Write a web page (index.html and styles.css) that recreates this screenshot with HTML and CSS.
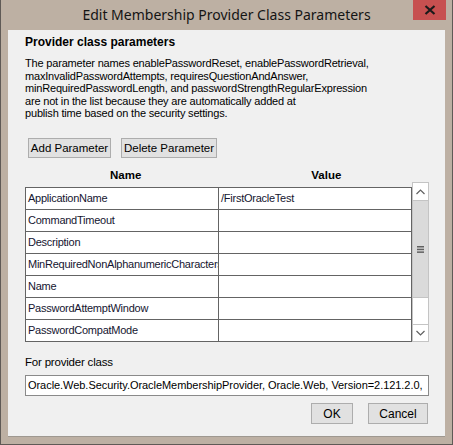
FILE: index.html
```html
<!DOCTYPE html>
<html>
<head>
<meta charset="utf-8">
<link rel="stylesheet" href="styles.css">
</head>
<body>
<div class="window">
  <div class="titlebar">
    <div class="tb-spacer"></div>
    <div class="title">Edit Membership Provider Class Parameters</div>
    <div class="tb-right"><div class="close"><svg width="12" height="10" viewBox="0 0 12 10"><path d="M1.5 1 L10.5 9 M10.5 1 L1.5 9" stroke="#1a1a1a" stroke-width="2.2" fill="none"/></svg></div></div>
  </div>
  <div class="client">
    <div class="heading">Provider class parameters</div>
    <p class="info">The parameter names enablePasswordReset, enablePasswordRetrieval,<br>maxInvalidPasswordAttempts, requiresQuestionAndAnswer,<br>minRequiredPasswordLength, and passwordStrengthRegularExpression<br>are not in the list because they are automatically added at<br>publish time based on the security settings.</p>
    <div class="btnrow">
      <button class="btn btn-add">Add Parameter</button>
      <button class="btn btn-del">Delete Parameter</button>
    </div>
    <div class="colheads">
      <div class="colhead colhead-name">Name</div>
      <div class="colhead colhead-value">Value</div>
    </div>
    <div class="gridwrap">
      <div class="grid">
        <div class="cell">ApplicationName</div><div class="cell">/FirstOracleTest</div>
        <div class="cell">CommandTimeout</div><div class="cell"></div>
        <div class="cell">Description</div><div class="cell"></div>
        <div class="cell">MinRequiredNonAlphanumericCharacters</div><div class="cell"></div>
        <div class="cell">Name</div><div class="cell"></div>
        <div class="cell">PasswordAttemptWindow</div><div class="cell"></div>
        <div class="cell">PasswordCompatMode</div><div class="cell"></div>
      </div>
      <div class="scrollbar">
        <div class="sb-btn"><svg width="9" height="6" viewBox="0 0 9 6"><path d="M0.5 5 L4.5 1 L8.5 5" stroke="#606060" stroke-width="1.2" fill="none"/></svg></div>
        <div class="sb-thumb"><svg width="7" height="7" viewBox="0 0 7 7"><rect x="0" y="0" width="7" height="1.5" fill="#606060"/><rect x="0" y="2.7" width="7" height="1.5" fill="#606060"/><rect x="0" y="5.4" width="7" height="1.5" fill="#606060"/></svg></div>
        <div class="sb-track"></div>
        <div class="sb-btn sb-btn-down"><svg width="9" height="6" viewBox="0 0 9 6"><path d="M0.5 1 L4.5 5 L8.5 1" stroke="#606060" stroke-width="1.2" fill="none"/></svg></div>
      </div>
    </div>
    <div class="forlabel">For provider class</div>
    <div class="textbox">Oracle.Web.Security.OracleMembershipProvider, Oracle.Web, Version=2.121.2.0,</div>
    <div class="okrow">
      <button class="btn btn-ok">OK</button>
      <button class="btn btn-cancel">Cancel</button>
    </div>
  </div>
</div>
</body>
</html>
```

FILE: styles.css
```css
html, body {
  margin: 0;
  padding: 0;
  background: #bdb0a3;
}
.window {
  width: 453px;
  height: 445px;
  box-sizing: border-box;
  background: #bdb0a3;
  border-left: 1px solid #5f5a56;
  border-right: 1px solid #5f5a56;
  border-bottom: 1px solid #5f5a56;
  display: flex;
  flex-direction: column;
  font-family: "Liberation Sans", Arial, sans-serif;
}
.titlebar {
  height: 30px;
  display: grid;
  grid-template-columns: 1fr auto 1fr;
  align-items: start;
}
.title {
  font-family: "Noto Sans", "Open Sans", sans-serif;
  font-size: 14px;
  color: #141414;
  line-height: 30px;
}
.tb-right {
  display: flex;
  justify-content: flex-end;
  padding-right: 6px;
}
.close {
  width: 33px;
  height: 20px;
  background: #c75050;
  display: flex;
  align-items: center;
  justify-content: center;
}
.client {
  margin: 0 7px 7px 7px;
  flex: 1;
  background: #f0f0f0;
  border-bottom: 1px solid #9e9890;
  padding: 0 16px 0 17px;
  display: flex;
  flex-direction: column;
  color: #000;
}
.heading {
  font-weight: bold;
  font-size: 12px;
  line-height: 14px;
  margin-top: 5px;
}
.info {
  margin: 8px 0 0 0;
  font-size: 11px;
  line-height: 12.5px;
  letter-spacing: -0.18px;
}
.btnrow {
  display: flex;
  gap: 10px;
  margin-top: 18.5px;
  padding-left: 3px;
}
.btn {
  font-family: "Liberation Sans", Arial, sans-serif;
  font-size: 11.5px;
  color: #000;
  background: #e1e1e1;
  border: 1px solid #adadad;
  height: 20px;
  padding: 0;
  margin: 0;
  box-sizing: border-box;
}
.btn-add { width: 83px; }
.btn-del { width: 96px; }
.colheads {
  display: flex;
  margin-top: 9px;
  height: 16px;
  font-weight: bold;
  font-size: 11.5px;
  line-height: 16px;
}
.colhead-name { margin-left: 85px; }
.colhead-value { margin-left: 170px; }
.gridwrap {
  display: flex;
  align-items: flex-start;
  margin-top: -1px;
}
.grid {
  margin-top: 5px;
  width: 387px;
  box-sizing: border-box;
  display: grid;
  grid-template-columns: 193px 193px;
  border-top: 1px solid #646464;
  border-left: 1px solid #646464;
}
.cell {
  height: 22px;
  box-sizing: border-box;
  border-right: 1px solid #646464;
  border-bottom: 1px solid #646464;
  background: #fff;
  font-size: 11px;
  line-height: 21px;
  padding-left: 2px;
  letter-spacing: -0.25px;
  white-space: nowrap;
  overflow: hidden;
  color: #151530;
}
.scrollbar {
  width: 17px;
  height: 160px;
  box-sizing: border-box;
  border: 1px solid #c4c4c4;
  background: #fff;
  display: flex;
  flex-direction: column;
}
.sb-btn {
  height: 17px;
  display: flex;
  align-items: center;
  justify-content: center;
  background: #fff;
}
.sb-btn-down {
  border-top: 1px solid #c4c4c4;
  height: 16px;
}
.sb-thumb {
  height: 98px;
  box-sizing: border-box;
  background: #dadada;
  border-top: 1px solid #c4c4c4;
  border-bottom: 1px solid #c4c4c4;
  display: flex;
  align-items: center;
  justify-content: center;
}
.sb-track {
  flex: 1;
  background: #fff;
}
.forlabel {
  margin-top: 12px;
  font-size: 11.5px;
  line-height: 16px;
  letter-spacing: -0.2px;
}
.textbox {
  margin-top: 5px;
  width: 404px;
  height: 21px;
  box-sizing: border-box;
  border: 1px solid #8a8a8a;
  background: #fff;
  font-size: 11px;
  line-height: 19px;
  padding-left: 2px;
  letter-spacing: -0.05px;
  white-space: nowrap;
  overflow: hidden;
}
.okrow {
  display: flex;
  justify-content: flex-end;
  gap: 15px;
  margin-top: 7px;
  padding-right: 1px;
}
.btn-ok { width: 42px; height: 21px; font-size: 12px; }
.btn-cancel { width: 60px; height: 21px; font-size: 12px; }
```
